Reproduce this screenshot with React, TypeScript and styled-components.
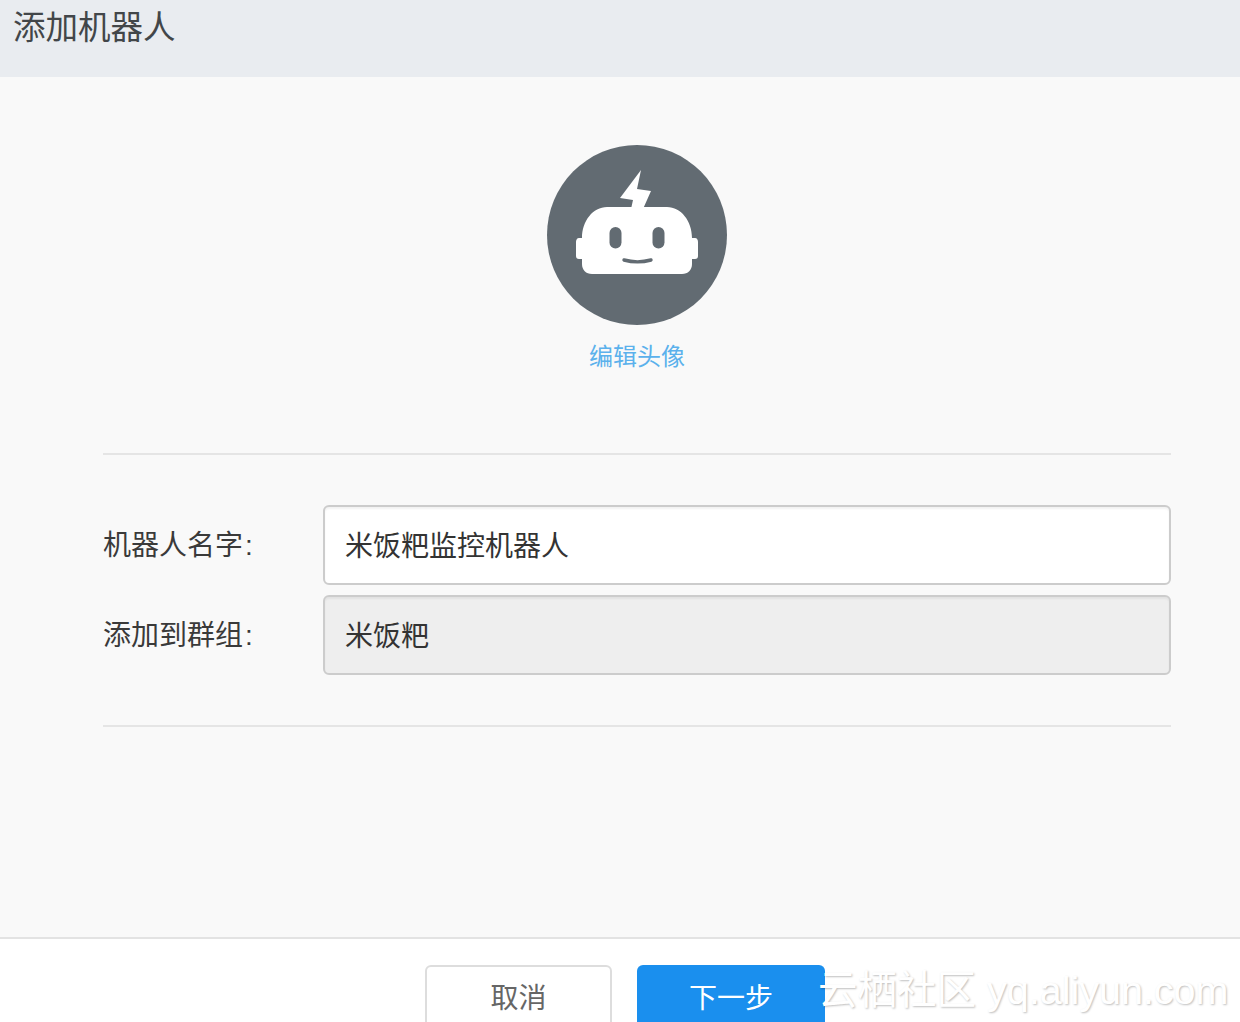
import styled, { createGlobalStyle } from 'styled-components';

const GlobalStyle = createGlobalStyle`
  html, body {
    margin: 0;
    padding: 0;
    height: 100%;
    overflow: hidden;
    background: #ffffff;
    font-family: "Liberation Sans", "Noto Sans CJK SC", sans-serif;
  }
  * {
    box-sizing: border-box;
  }
`;

function RobotAvatar() {
  return (
    <svg width="180" height="180" viewBox="0 0 180 180">
      <circle cx="90" cy="90" r="90" fill="#626b72" />
      <path d="M94 25 L73 53 L86 55 L84 64 L96 64 L104 46 L90 44 Z" fill="#fff" />
      <path
        d="M60 62 H120 C134 62 145 76 145 93 H148 C150 93 151 95 151 97 V111 C151 113 150 114 148 114 H145 V119 C145 125 141 129 135 129 H45 C39 129 35 125 35 119 V114 H32 C30 114 29 113 29 111 V97 C29 95 30 93 32 93 H35 C35 76 46 62 60 62 Z"
        fill="#fff"
      />
      <rect x="62.5" y="82" width="12" height="21.5" rx="6" fill="#626b72" />
      <rect x="105.5" y="82" width="12" height="21.5" rx="6" fill="#626b72" />
      <path d="M77 115 C86 117.5 95 117.5 104 115" fill="none" stroke="#626b72" strokeWidth="3.4" strokeLinecap="round" />
    </svg>
  );
}

export default function App() {
  return (
    <Page>
      <GlobalStyle />
      <Header>
        <Title>添加机器人</Title>
      </Header>
      <Body>
        <AvatarBlock>
          <RobotAvatar />
          <EditLink>编辑头像</EditLink>
        </AvatarBlock>
        <Form>
          <FormRow>
            <Label>机器人名字<Colon>:</Colon></Label>
            <Field value="米饭粑监控机器人" readOnly />
          </FormRow>
          <FormRow>
            <Label>添加到群组<Colon>:</Colon></Label>
            <Field value="米饭粑" readOnly disabledLook />
          </FormRow>
        </Form>
      </Body>
      <Footer>
        <CancelButton>取消</CancelButton>
        <NextButton>下一步</NextButton>
      </Footer>
      <Watermark>云栖社区 yq.aliyun.com</Watermark>
    </Page>
  );
}

const Page = styled.div`
  position: relative;
  width: 1240px;
  height: 1022px;
  overflow: hidden;
`;

const Header = styled.header`
  height: 77px;
  padding: 6px 0 0 13px;
  background: #e9ecf0;
`;

const Title = styled.h1`
  margin: 0;
  font-size: 32.5px;
  line-height: 44px;
  font-weight: 400;
  color: #424649;
`;

const Body = styled.main`
  height: 860px;
  padding: 68px 69px 0 103px;
  background: #f9f9f9;
`;

const AvatarBlock = styled.section`
  height: 310px;
  display: flex;
  flex-direction: column;
  align-items: center;
  border-bottom: 2px solid #e5e5e5;

  svg {
    display: block;
  }
`;

const EditLink = styled.a`
  margin-top: 15px;
  font-size: 24px;
  line-height: 34px;
  color: #5bb1ec;
`;

const Form = styled.section`
  height: 272px;
  padding-top: 50px;
  display: flex;
  flex-direction: column;
  gap: 10px;
  border-bottom: 2px solid #e5e5e5;
`;

const FormRow = styled.div`
  display: flex;
  align-items: center;
`;

const Label = styled.label`
  width: 220px;
  padding-top: 2px;
  font-size: 28px;
  line-height: 40px;
  color: #3a3a3a;
`;

const Colon = styled.span`
  margin-left: 2px;
`;

const Field = styled.input.withConfig({
  shouldForwardProp: (prop) => prop !== 'disabledLook',
})<{ disabledLook?: boolean }>`
  flex: 1;
  height: 80px;
  padding: 0 20px 2px;
  border: 2px solid #cccccc;
  border-radius: 6px;
  outline: none;
  background: ${({ disabledLook }) => (disabledLook ? '#eeeeee' : '#ffffff')};
  box-shadow: inset 0 2px 2px rgba(0, 0, 0, 0.05);
  font-family: inherit;
  font-size: 28px;
  color: #333333;
`;

const Footer = styled.footer`
  height: 85px;
  display: flex;
  gap: 25px;
  padding: 26px 0 0 425px;
  border-top: 2px solid #e3e3e3;
  background: #ffffff;
`;

const CancelButton = styled.button`
  flex: none;
  width: 187px;
  height: 80px;
  border: 2px solid #dddddd;
  border-radius: 6px;
  background: #ffffff;
  font-family: inherit;
  font-size: 28px;
  color: #666666;
  padding: 0 0 18px;
`;

const NextButton = styled.button`
  flex: none;
  width: 188px;
  height: 80px;
  border: none;
  border-radius: 6px;
  background: #1a8fee;
  font-family: inherit;
  font-size: 28px;
  color: #ffffff;
  padding: 0 0 18px;
`;

const Watermark = styled.div`
  position: absolute;
  left: 818px;
  top: 965px;
  font-size: 39.5px;
  line-height: 50px;
  white-space: nowrap;
  color: #ffffff;
  text-shadow: 1px 1px 2px rgba(0, 0, 0, 0.25);
`;
